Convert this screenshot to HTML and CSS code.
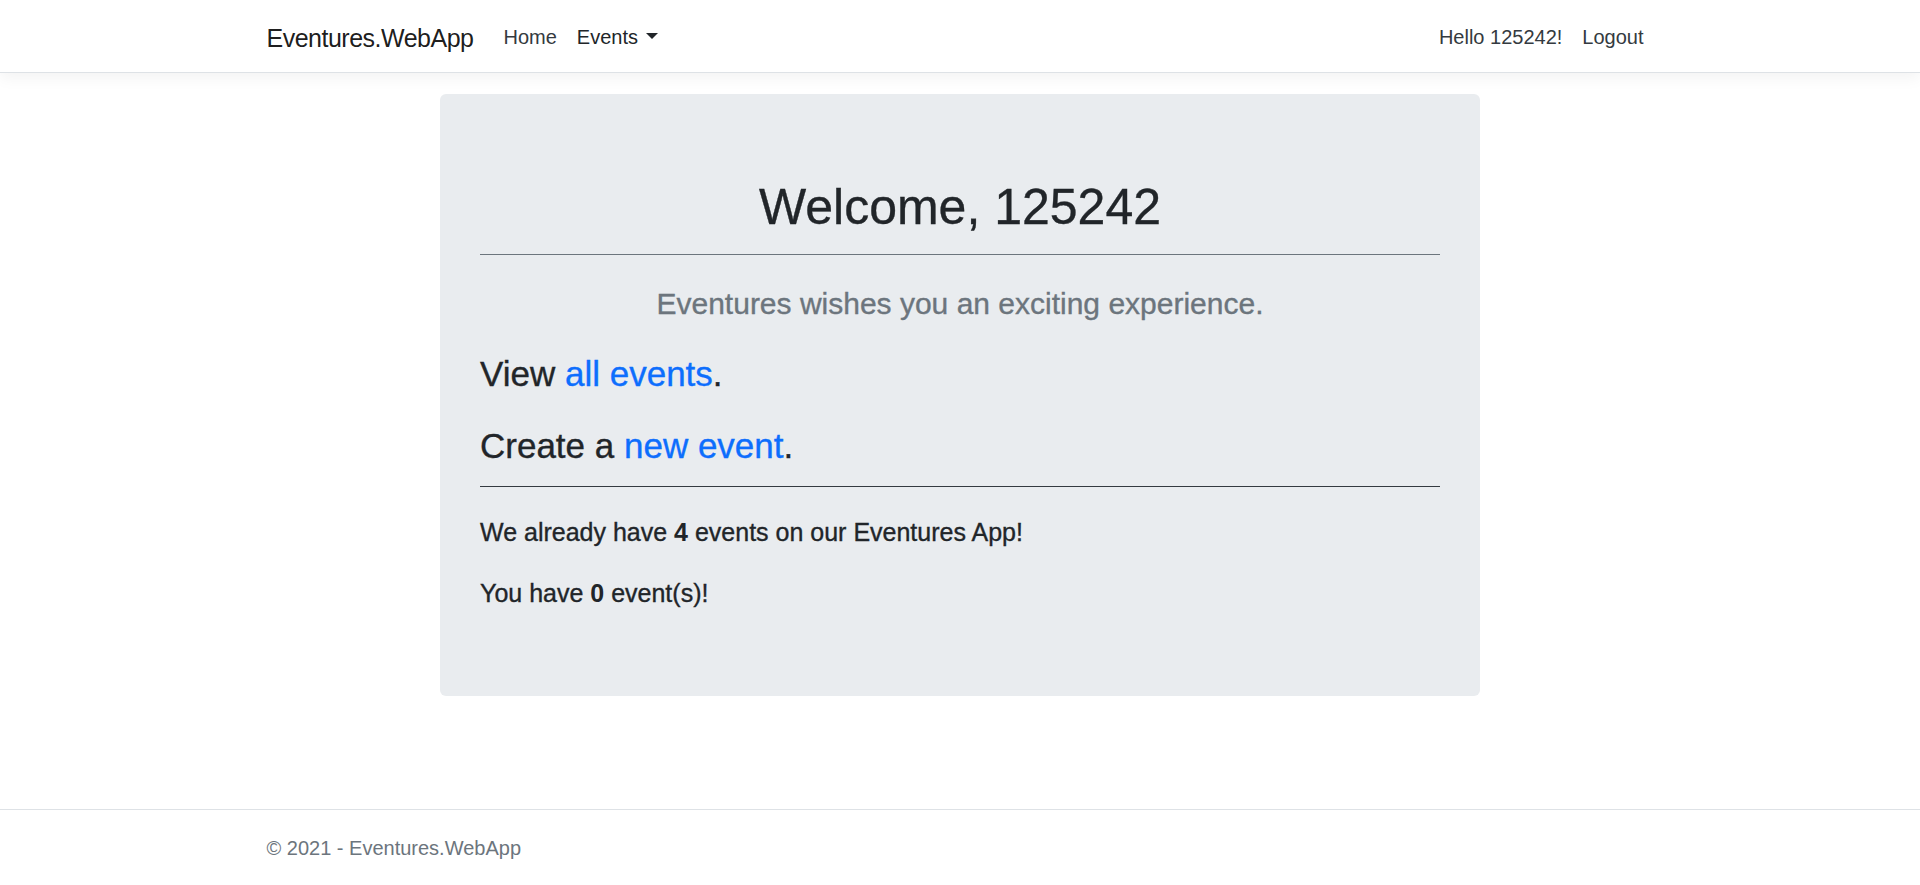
FILE: index.html
```html
<!DOCTYPE html>
<html lang="en">
<head>
<meta charset="utf-8">
<title>Home - Eventures.WebApp</title>
<link rel="stylesheet" href="styles.css">
</head>
<body>
<header class="navbar">
  <div class="container nav-inner">
    <a class="brand" href="#">Eventures.WebApp</a>
    <ul class="nav-list">
      <li><a class="nav-link" href="#">Home</a></li>
      <li><a class="nav-link nav-link-strong" href="#">Events<span class="caret"></span></a></li>
    </ul>
    <ul class="nav-list nav-right">
      <li><a class="nav-link" href="#">Hello 125242!</a></li>
      <li><a class="nav-link" href="#">Logout</a></li>
    </ul>
  </div>
</header>

<main class="container main">
  <section class="jumbotron">
    <h1 class="welcome">Welcome, 125242</h1>
    <hr class="rule rule-muted">
    <h4 class="subtitle">Eventures wishes you an exciting experience.</h4>
    <h3 class="action">View <a href="#" class="link">all events</a>.</h3>
    <h3 class="action">Create a <a href="#" class="link">new event</a>.</h3>
    <hr class="rule rule-dark">
    <h5 class="stat">We already have <b>4</b> events on our Eventures App!</h5>
    <h5 class="stat">You have <b>0</b> event(s)!</h5>
  </section>
</main>

<footer class="footer">
  <div class="container footer-inner">&copy; 2021 - Eventures.WebApp</div>
</footer>
</body>
</html>
```
FILE: styles.css
```css
* { box-sizing: border-box; }

html, body { margin: 0; padding: 0; }

body {
  font-family: "Liberation Sans", Arial, sans-serif;
  color: #212529;
  background: #fff;
  min-height: 100vh;
  display: flex;
  flex-direction: column;
}

a { text-decoration: none; }

.container {
  width: 1425px;
  margin: 0 auto;
  padding: 0 19px;
}

/* Navbar */
.navbar {
  height: 73px;
  background: #fff;
  border-bottom: 1px solid #dee2e6;
  box-shadow: 0 5px 15px rgba(0, 0, 0, 0.05);
}

.nav-inner {
  display: flex;
  align-items: flex-start;
  padding-top: 22px;
}

.brand {
  font-size: 25px;
  line-height: 30px;
  margin-top: 1px;
  margin-right: 20px;
  letter-spacing: -0.5px;
  color: rgba(0, 0, 0, 0.9);
  white-space: nowrap;
}

.nav-list {
  list-style: none;
  margin: 0;
  padding: 0;
  display: flex;
}

.nav-right { margin-left: auto; }

.nav-link {
  display: block;
  padding: 0 10px;
  font-size: 20px;
  line-height: 30px;
  color: #343a40;
}

.nav-link-strong { color: #212529; }

.caret {
  display: inline-block;
  margin-left: 8px;
  vertical-align: 5px;
  border-top: 6px solid #212529;
  border-left: 6px solid transparent;
  border-right: 6px solid transparent;
  border-bottom: 0;
}

/* Main */
.main {
  padding-top: 21px;
  flex: 1 0 auto;
}

.jumbotron {
  width: 1040px;
  margin: 0 auto;
  background: #e9ecef;
  border-radius: 6px;
  padding: 83px 40px 88px;
}

.welcome,
.subtitle,
.action,
.stat {
  -webkit-text-stroke: 0.35px currentColor;
}

.welcome {
  margin: 0;
  font-size: 50px;
  line-height: 60px;
  font-weight: 400;
  text-align: center;
}

.rule {
  margin: 0;
  border: 0;
  height: 1px;
}

.rule-muted {
  margin-top: 17px;
  background: #6c757d;
}

.subtitle {
  margin: 31px 0 0;
  font-size: 30px;
  line-height: 36px;
  font-weight: 400;
  color: #6c757d;
  text-align: center;
}

.action {
  margin: 31px 0 0;
  font-size: 35px;
  line-height: 42px;
  font-weight: 400;
}

.action + .action { margin-top: 30px; }

.link { color: #0d6efd; }

.rule-dark {
  margin-top: 19px;
  background: #343a40;
}

.stat {
  margin: 30px 0 0;
  font-size: 25px;
  line-height: 30px;
  font-weight: 400;
}

.stat + .stat { margin-top: 31px; }

.stat b { font-weight: 700; -webkit-text-stroke: 0; }

/* Footer */
.footer {
  border-top: 1px solid #dee2e6;
  height: 76px;
}

.footer-inner {
  padding-top: 2px;
  font-size: 20px;
  line-height: 73px;
  color: #6c757d;
  white-space: nowrap;
}
```
